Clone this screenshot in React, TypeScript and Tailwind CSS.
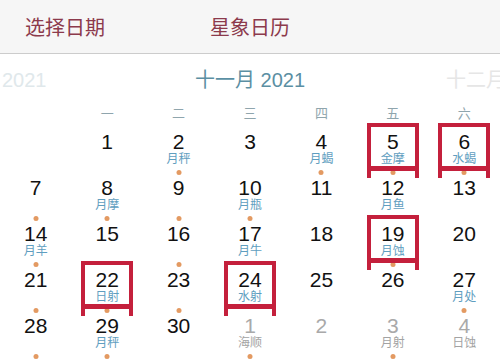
import React from "react";

type Cell = { n?: number; label?: string; dot?: boolean; box?: boolean; gray?: boolean };

const rows: Cell[][] = [
  [
    {},
    { n: 1 },
    { n: 2, label: "月秤", dot: true },
    { n: 3 },
    { n: 4, label: "月蝎", dot: true },
    { n: 5, label: "金摩", dot: true, box: true },
    { n: 6, label: "水蝎", dot: true, box: true },
  ],
  [
    { n: 7, dot: true },
    { n: 8, label: "月摩", dot: true },
    { n: 9, dot: true },
    { n: 10, label: "月瓶", dot: true },
    { n: 11 },
    { n: 12, label: "月鱼" },
    { n: 13 },
  ],
  [
    { n: 14, label: "月羊", dot: true },
    { n: 15 },
    { n: 16, dot: true },
    { n: 17, label: "月牛" },
    { n: 18 },
    { n: 19, label: "月蚀", dot: true, box: true },
    { n: 20 },
  ],
  [
    { n: 21, dot: true },
    { n: 22, label: "日射", dot: true, box: true },
    { n: 23, dot: true },
    { n: 24, label: "水射", box: true },
    { n: 25 },
    { n: 26 },
    { n: 27, label: "月处", dot: true },
  ],
  [
    { n: 28, dot: true },
    { n: 29, label: "月秤", dot: true },
    { n: 30 },
    { n: 1, label: "海顺", dot: true, gray: true },
    { n: 2, gray: true },
    { n: 3, label: "月射", dot: true, gray: true },
    { n: 4, label: "日蚀", gray: true },
  ],
];

const weekdays = ["", "一", "二", "三", "四", "五", "六"];

function DayCell({ c }: { c: Cell }) {
  return (
    <div className="relative h-[46px] pt-[1px] flex flex-col items-center">
      {c.n !== undefined && (
        <div
          className={`text-[21px] leading-[22px] ${c.gray ? "text-[#a9a9a9]" : "text-[#111111]"}`}
          style={{ fontFamily: '"Liberation Sans", Arial, sans-serif' }}
        >
          {c.n}
        </div>
      )}
      {c.label && (
        <div
          className={`text-[12px] leading-[12px] ${c.gray ? "text-[#a3a3a3]" : "text-[#5f9ec0]"}`}
        >
          {c.label}
        </div>
      )}
      {c.dot && (
        <div className="absolute top-[40px] left-1/2 -translate-x-1/2 w-[5px] h-[5px] rounded-full bg-[#e39a62]" />
      )}
      {c.box && (
        <div className="absolute top-[-7px] left-1/2 -translate-x-1/2 w-[52px] h-[55px] z-10">
          <div className="h-[48px] w-full border-[4px] border-b-[5px] border-[#c4203c]" />
          <div className="absolute bottom-0 left-0 w-[4px] h-[8px] bg-[#c4203c]" />
          <div className="absolute bottom-0 right-0 w-[4px] h-[8px] bg-[#c4203c]" />
        </div>
      )}
    </div>
  );
}

export default function App() {
  return (
    <div
      className="w-[500px] h-[361px] overflow-hidden bg-white"
      style={{ fontFamily: '"Liberation Sans", "Noto Sans CJK SC", sans-serif' }}
    >
      <div className="h-[54px] bg-[#f6f6f6] border-b border-[#cccccc] flex items-center pl-[25px]">
        <span className="text-[20px] text-[#8c3a4c]" style={{ fontFamily: '"Noto Sans CJK SC", sans-serif' }}>
          选择日期
        </span>
        <span className="ml-[105px] text-[20px] text-[#8c3a4c]" style={{ fontFamily: '"Noto Sans CJK SC", sans-serif' }}>
          星象日历
        </span>
      </div>
      <div className="h-[48px] pt-[4px] flex items-center">
        <div className="w-[100px] pl-[2px] text-[20px] text-[#e0e8eb]">2021</div>
        <div className="flex-1 text-center text-[20px] text-[#5b8fa3]">十一月 2021</div>
        <div className="w-[100px] pl-[46px] text-[20px] text-[#e6e6e6] whitespace-nowrap overflow-hidden">十二月</div>
      </div>
      <div className="h-[24px] grid grid-cols-7 items-center">
        {weekdays.map((w, i) => (
          <div key={i} className="text-center text-[13px] leading-[16px] text-[#8fa5ad]">
            {w}
          </div>
        ))}
      </div>
      <div className="mt-[4px] grid grid-cols-7">
        {rows.flat().map((c, i) => (
          <DayCell key={i} c={c} />
        ))}
      </div>
    </div>
  );
}
